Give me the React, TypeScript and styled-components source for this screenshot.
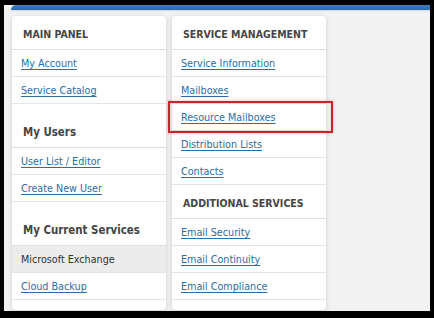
import React from "react";
import styled, { createGlobalStyle } from "styled-components";

const GlobalStyle = createGlobalStyle`
  html, body {
    margin: 0;
    padding: 0;
    background: #000;
  }
  body {
    font-family: "DejaVu Sans", Verdana, sans-serif;
    font-stretch: condensed;
  }
`;

const Frame = styled.div`
  box-sizing: border-box;
  width: 426px;
  height: 306px;
  margin: 5px 0 0 4px;
  background: #f2f2f2;
  overflow: hidden;
  display: flex;
  flex-direction: column;
`;

const TopBar = styled.div`
  height: 5px;
  margin-left: 7px;
  border-top-left-radius: 5px;
  background: linear-gradient(#3b80c2, #2a68a6);
  box-shadow: 0 1px 2px rgba(0, 0, 0, 0.12);
`;

const Columns = styled.div`
  display: flex;
  gap: 6px;
  padding: 6px 0 0 8px;
`;

const Panel = styled.div`
  width: 154px;
  height: 294px;
  background: #fff;
  border-radius: 4px;
  box-shadow: 0 1px 4px rgba(0, 0, 0, 0.16);
  display: flex;
  flex-direction: column;
`;

const Header = styled.div<{ $spaced?: boolean; $caps?: boolean }>`
  padding: ${(p) => (p.$spaced ? "21px" : "11px")} 9px 8px 11px;
  line-height: 14px;
  font-weight: bold;
  font-size: ${(p) => (p.$caps ? "10.5px" : "11.4px")};
  color: #454545;
  border-bottom: 1px solid #dedede;
  white-space: nowrap;
`;

const Item = styled.div<{ $active?: boolean }>`
  position: relative;
  height: 25px;
  padding: 1px 9px 0;
  line-height: 25px;
  font-size: 10.7px;
  border-bottom: 1px solid #e4e4e4;
  background: ${(p) => (p.$active ? "#ececec" : "transparent")};
  color: #333;
  white-space: nowrap;
`;

const Link = styled.a`
  color: #2b6da6;
  text-decoration: underline;
  text-underline-offset: 2px;
  cursor: pointer;
`;

const Highlight = styled.div`
  position: absolute;
  top: -3px;
  bottom: -3px;
  left: -4px;
  right: -7px;
  border: 2px solid #c8242b;
  box-shadow: 0 0 3px rgba(200, 36, 43, 0.35), inset 0 0 2px rgba(200, 36, 43, 0.25);
  pointer-events: none;
`;

type Entry = { label: string; active?: boolean; marked?: boolean };
type Section = { title: string; caps?: boolean; items: Entry[] };

const leftSections: Section[] = [
  {
    title: "MAIN PANEL",
    caps: true,
    items: [{ label: "My Account" }, { label: "Service Catalog" }],
  },
  {
    title: "My Users",
    items: [{ label: "User List / Editor" }, { label: "Create New User" }],
  },
  {
    title: "My Current Services",
    items: [{ label: "Microsoft Exchange", active: true }, { label: "Cloud Backup" }],
  },
];

const rightSections: Section[] = [
  {
    title: "SERVICE MANAGEMENT",
    caps: true,
    items: [
      { label: "Service Information" },
      { label: "Mailboxes" },
      { label: "Resource Mailboxes", marked: true },
      { label: "Distribution Lists" },
      { label: "Contacts" },
    ],
  },
  {
    title: "ADDITIONAL SERVICES",
    caps: true,
    items: [
      { label: "Email Security" },
      { label: "Email Continuity" },
      { label: "Email Compliance" },
    ],
  },
];

function Menu({ sections }: { sections: Section[] }) {
  return (
    <Panel>
      {sections.map((s, i) => (
        <React.Fragment key={s.title}>
          <Header $caps={s.caps} $spaced={i > 0 && !s.caps}>
            {s.title}
          </Header>
          {s.items.map((it) => (
            <Item key={it.label} $active={it.active}>
              {it.active ? it.label : <Link>{it.label}</Link>}
              {it.marked && <Highlight />}
            </Item>
          ))}
        </React.Fragment>
      ))}
    </Panel>
  );
}

export default function App() {
  return (
    <>
      <GlobalStyle />
      <Frame>
        <TopBar />
        <Columns>
          <Menu sections={leftSections} />
          <Menu sections={rightSections} />
        </Columns>
      </Frame>
    </>
  );
}
